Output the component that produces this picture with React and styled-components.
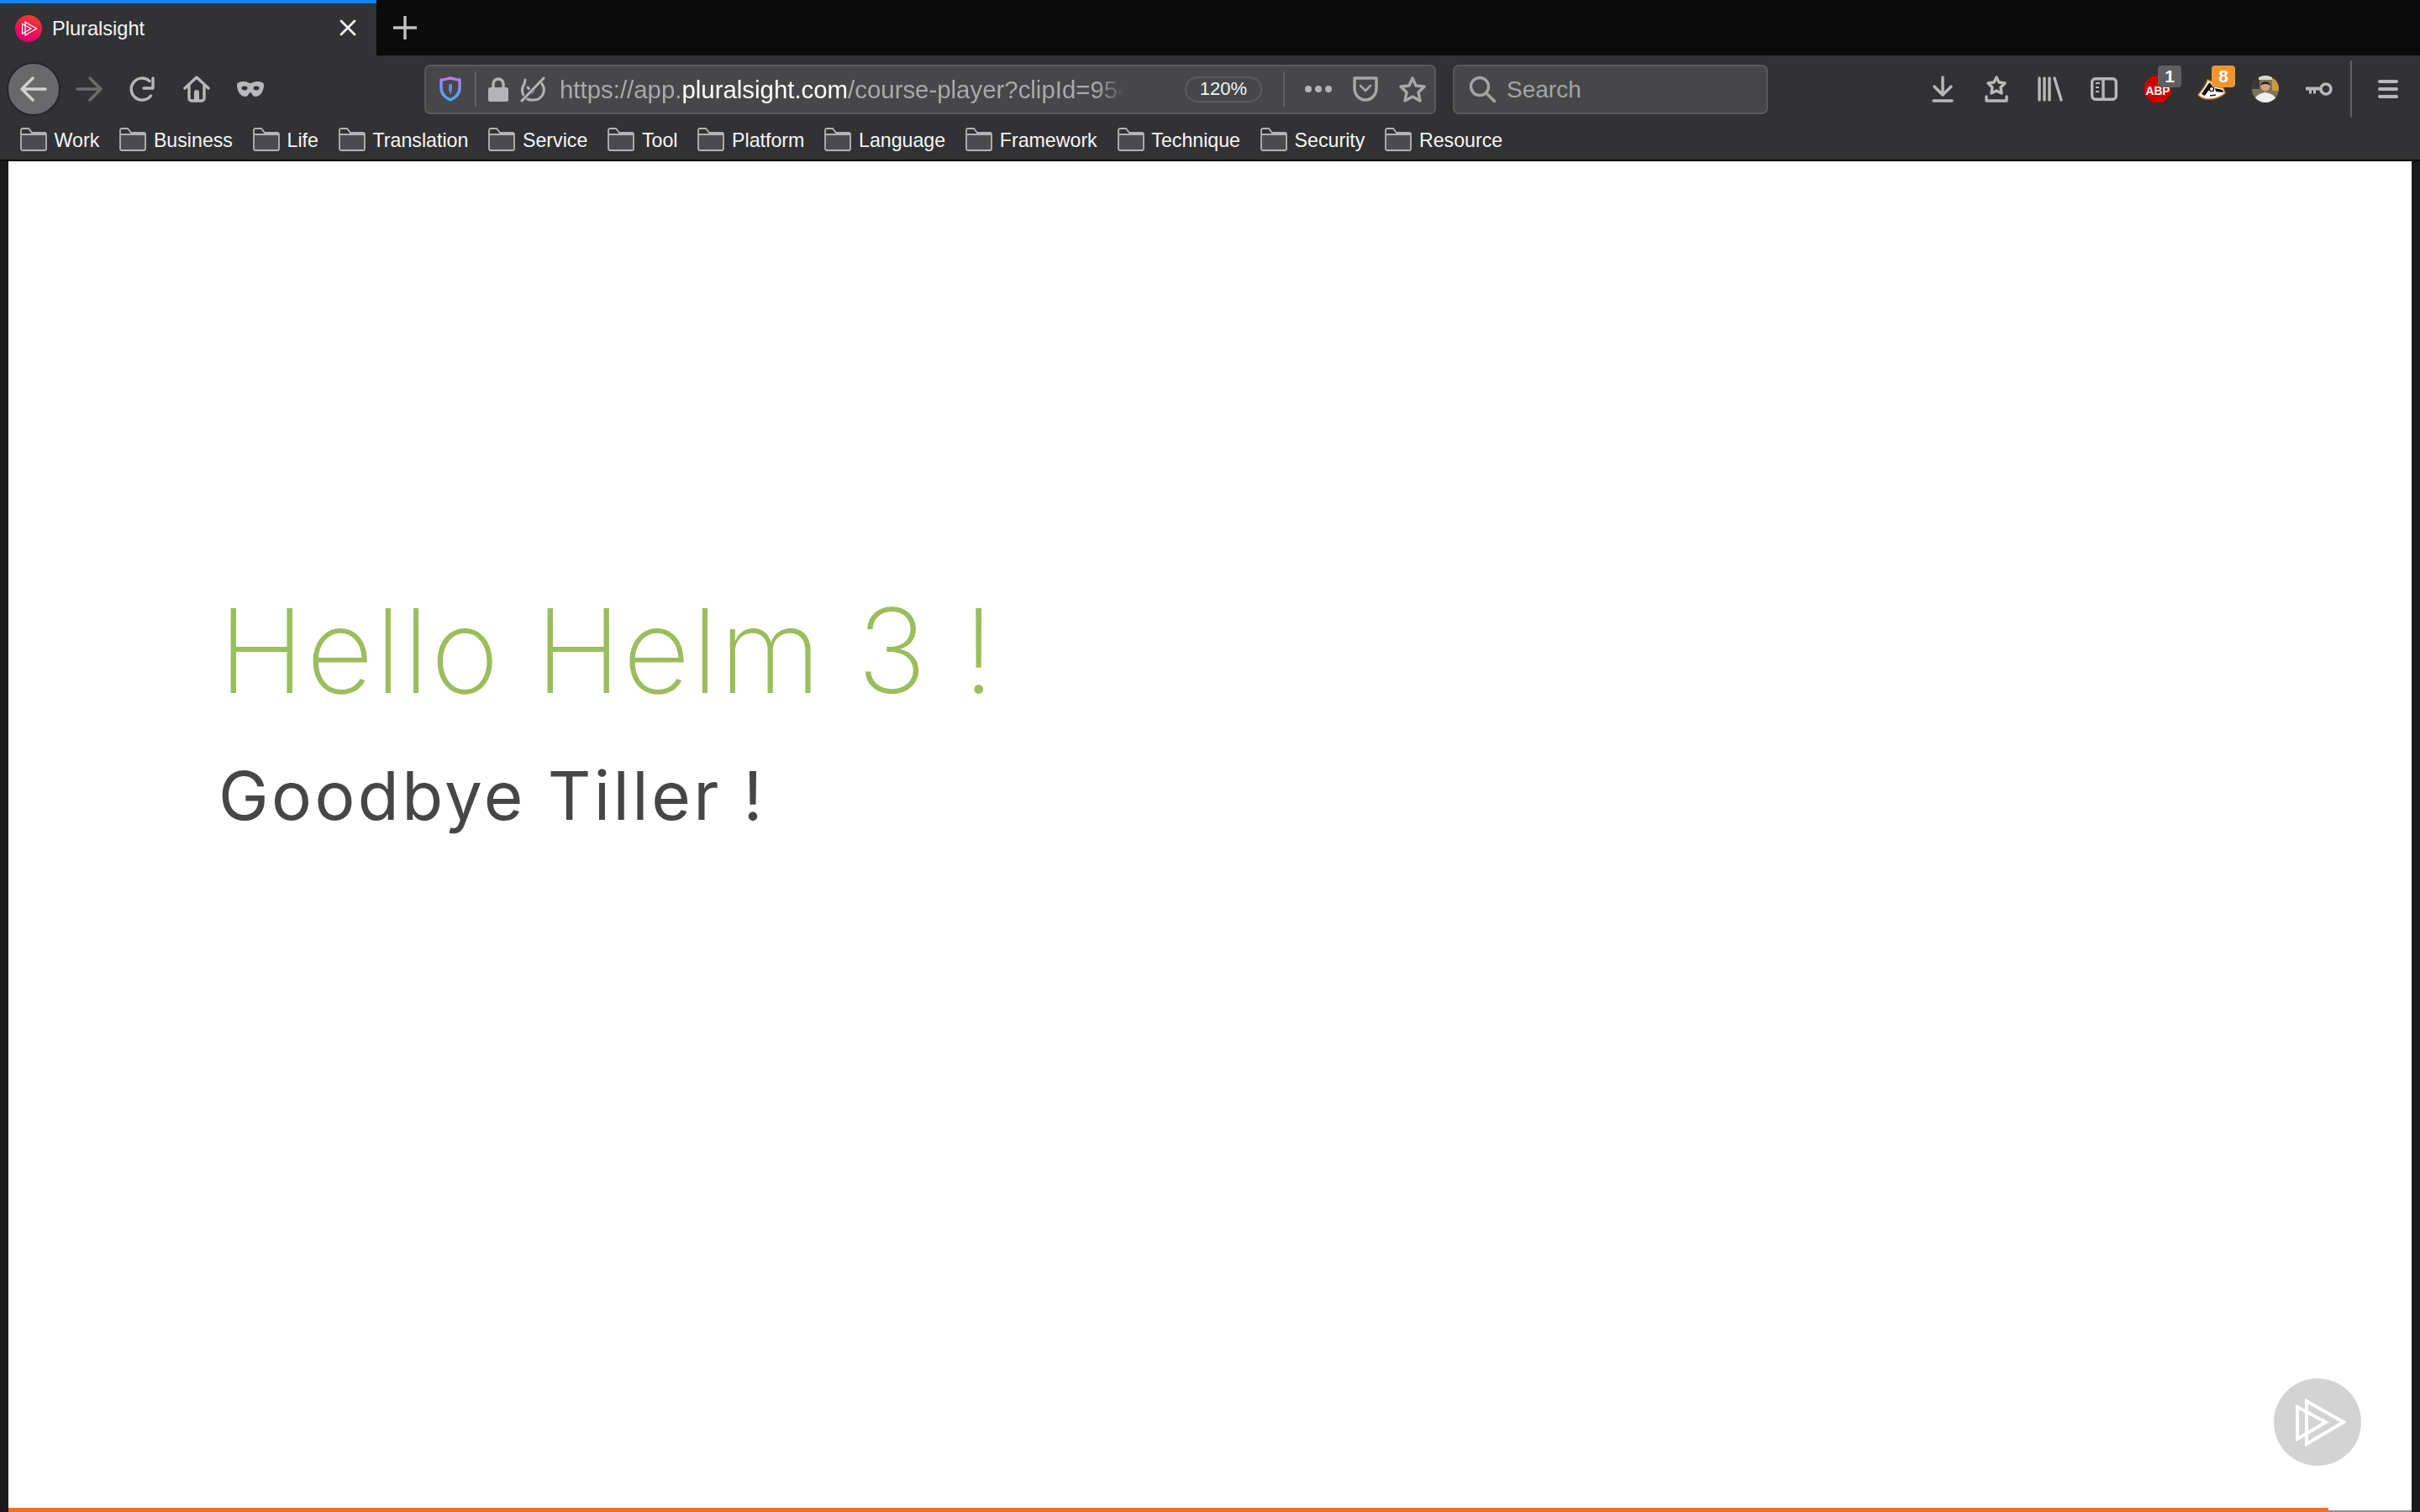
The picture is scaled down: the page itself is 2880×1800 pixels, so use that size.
import styled, { createGlobalStyle } from "styled-components";

const GlobalStyle = createGlobalStyle`
    html, body {
        margin: 0;
        padding: 0;
        background: #1a1a1a;
        overflow: hidden;
    }
`;

const BOOKMARKS = ["Work", "Business", "Life", "Translation", "Service", "Tool", "Platform", "Language", "Framework", "Technique", "Security", "Resource"];

const FolderIcon = () => (
    <FolderSvg viewBox="0 0 32 28">
        <path d="M1 8H31V25a2 2 0 0 1-2 2H3a2 2 0 0 1-2-2Z" fill="#4b4b4d" />
        <path d="M1 25V3a2 2 0 0 1 2-2H10l4 5H29a2 2 0 0 1 2 2V25a2 2 0 0 1-2 2H3a2 2 0 0 1-2-2ZM1 8H31" fill="none" stroke="#b4b4b6" strokeWidth="1.8" />
    </FolderSvg>
);

const BackIcon = () => (
    <IconSvg $size={32} viewBox="0 0 32 32" fill="none" stroke="currentColor" strokeWidth="3.4" strokeLinecap="round" strokeLinejoin="round">
        <path d="M30 16H2M15 3L2 16L15 29" />
    </IconSvg>
);

const ForwardIcon = () => (
    <IconSvg $size={32} $color="#6d6d6f" viewBox="0 0 32 32" fill="none" stroke="currentColor" strokeWidth="3.4" strokeLinecap="round" strokeLinejoin="round">
        <path d="M2 16H30M17 3L30 16L17 29" />
    </IconSvg>
);

const ReloadIcon = () => (
    <IconSvg $size={32} viewBox="0 0 32 32" fill="none" stroke="currentColor" strokeWidth="3.4" strokeLinecap="round" strokeLinejoin="round">
        <path d="M24 6.5A13 13 0 1 0 25.5 24M28 3V15H17" />
    </IconSvg>
);

const HomeIcon = () => (
    <IconSvg $size={32} viewBox="0 0 32 32" fill="none" stroke="currentColor" strokeWidth="3.4" strokeLinecap="round" strokeLinejoin="round">
        <path d="M2 15L16 2L30 15M7 12V27a3 3 0 0 0 3 3H22a3 3 0 0 0 3-3V12" />
        <path d="M13 30V20a3 3 0 0 1 6 0V30Z" fill="currentColor" stroke="none" />
    </IconSvg>
);

const MaskIcon = () => (
    <IconSvg $size={32} viewBox="0 0 32 18">
        <path fill="currentColor" d="M0 4C0 1 4 0 8 0C12 0 14 2 16 2C18 2 20 0 24 0C28 0 32 1 32 4C32 11 28 18 22 18C18 18 18 13 16 13C14 13 14 18 10 18C4 18 0 11 0 4Z" />
        <ellipse cx="9" cy="8" rx="3.5" ry="2.4" fill="#323234" />
        <ellipse cx="23" cy="8" rx="3.5" ry="2.4" fill="#323234" />
    </IconSvg>
);

const ShieldIcon = () => (
    <IconSvg $size={26} viewBox="0 0 26 30">
        <defs>
            <linearGradient id="shieldGrad" x1="0" y1="0" x2="0" y2="1">
                <stop offset="0" stopColor="#b57cf5" />
                <stop offset="1" stopColor="#3fa9ff" />
            </linearGradient>
        </defs>
        <path d="M2 4C8 4 10 2 13 2C16 2 18 4 24 4V14C24 21 18 26 13 28C8 26 2 21 2 14Z" fill="none" stroke="url(#shieldGrad)" strokeWidth="3.4" strokeLinejoin="round" />
        <path d="M11 9H15V16L13 22L11 16Z" fill="#6f86d8" />
    </IconSvg>
);

const LockIcon = () => (
    <IconSvg $size={26} viewBox="0 0 26 30">
        <path d="M7 14V9a6 6 0 0 1 12 0V14" fill="none" stroke="currentColor" strokeWidth="3.4" />
        <rect x="1" y="13" width="24" height="17" rx="2.5" fill="currentColor" />
    </IconSvg>
);

const TrackingIcon = () => (
    <IconSvg $size={32} viewBox="0 0 32 32" fill="none" stroke="currentColor" strokeWidth="3" strokeLinecap="round" strokeLinejoin="round">
        <path d="M7 5L6 10A12 12 0 0 0 13 29H17A12 12 0 0 0 27 10L25 6" />
        <path d="M10 14L15 20L24 6" />
        <path d="M29 2L3 30" stroke="#474749" strokeWidth="5" />
        <path d="M29 3L3 30" />
    </IconSvg>
);

const PocketIcon = () => (
    <IconSvg $size={32} viewBox="0 0 32 32" fill="none" stroke="currentColor" strokeWidth="3.4" strokeLinecap="round" strokeLinejoin="round">
        <path d="M3 3H29V15C29 23 23 29 16 29C9 29 3 23 3 15Z" />
        <path d="M10 12L16 18L22 12" strokeWidth="2.6" />
    </IconSvg>
);

const StarIcon = () => (
    <IconSvg $size={32} viewBox="0 0 32 32" fill="none" stroke="currentColor" strokeWidth="3.4" strokeLinejoin="round">
        <path d="M16 3L20 12L30 13L23 20L25 30L16 25L7 30L9 20L2 13L12 12Z" />
    </IconSvg>
);

const SearchIcon = () => (
    <IconSvg $size={32} viewBox="0 0 32 32" fill="none" stroke="currentColor" strokeWidth="3.4" strokeLinecap="round">
        <circle cx="13" cy="13" r="10.5" />
        <path d="M21 21L31 31" />
    </IconSvg>
);

const DownloadIcon = () => (
    <IconSvg $size={26} viewBox="0 0 26 32" fill="none" stroke="currentColor" strokeWidth="3.4" strokeLinecap="round" strokeLinejoin="round">
        <path d="M13 2V23M3 13L13 23L23 13M2 30H24" />
    </IconSvg>
);

const SavedIcon = () => (
    <IconSvg $size={28} viewBox="0 0 28 32" fill="none" stroke="currentColor" strokeWidth="3.4" strokeLinejoin="round" strokeLinecap="round">
        <path d="M14 2L17 8L24 9L19 14L20 21L14 18L8 21L9 14L4 9L11 8Z" />
        <path d="M2 25V30H26V25" />
    </IconSvg>
);

const LibraryIcon = () => (
    <IconSvg $size={32} viewBox="0 0 32 32" fill="none" stroke="currentColor" strokeWidth="3.4" strokeLinecap="round">
        <path d="M3 3V29M9 3V29M15 3V29M21 3L29 29" />
    </IconSvg>
);

const SidebarIcon = () => (
    <IconSvg $size={32} viewBox="0 0 32 28" fill="none" stroke="currentColor" strokeWidth="3.4">
        <rect x="1.7" y="1.7" width="28.6" height="24.6" rx="4" />
        <path d="M15 2V26" />
        <path d="M6 7H11M6 12H10M6 17H10" strokeWidth="2.2" />
    </IconSvg>
);

const AbpIcon = () => (
    <IconSvg $size={32} viewBox="0 0 32 32">
        <path d="M9.5 0H22.5L32 9.5V22.5L22.5 32H9.5L0 22.5V9.5Z" fill="#cc0000" />
        <text x="16" y="23" textAnchor="middle" fontFamily="'Liberation Sans', sans-serif" fontWeight="700" fontSize="15" textLength="29" lengthAdjust="spacingAndGlyphs" fill="#fff">ABP</text>
    </IconSvg>
);

const BadgerIcon = () => (
    <IconSvg $size={34} viewBox="0 0 34 26">
        <path d="M1 20C6 14 11 8 12 2L17 4L21 10L31 12L33 18C28 22 22 25 14 25C9 25 4 23 1 20Z" fill="#fff" stroke="#e8781f" strokeWidth="1.4" strokeLinejoin="round" />
        <path d="M5 19L13 7L15 5L18 10L13 15L9 21ZM21 12L30 14L31 17L22 16Z" fill="#111" />
        <circle cx="17" cy="13" r="2.6" fill="#fff" stroke="#111" strokeWidth="1.4" />
        <path d="M15 21L22 20" stroke="#111" strokeWidth="1.6" />
    </IconSvg>
);

const AvatarIcon = () => (
    <IconSvg $size={32} viewBox="0 0 32 32">
        <defs>
            <clipPath id="avatarClip"><circle cx="16" cy="16" r="16" /></clipPath>
        </defs>
        <g clipPath="url(#avatarClip)">
            <rect width="32" height="32" fill="#7d7460" />
            <rect x="0" y="0" width="9" height="16" fill="#3a3a30" />
            <rect x="24" y="4" width="8" height="14" fill="#c79a45" />
            <rect x="8" y="0" width="16" height="5" fill="#d8d8cc" />
            <path d="M2 32C3 24 9 21 16 20C23 21 29 24 30 32Z" fill="#efefef" />
            <circle cx="16" cy="13" r="5.4" fill="#d3a482" />
            <path d="M10.5 12C10 6 22 6 21.5 12C19 9 13 9 10.5 12Z" fill="#1a1614" />
        </g>
    </IconSvg>
);

const KeyIcon = () => (
    <IconSvg $size={32} viewBox="0 0 32 16">
        <circle cx="24" cy="8" r="6" fill="none" stroke="currentColor" strokeWidth="3.6" />
        <path d="M0 5.4H18V9.6H12V13.5H9V9.6H7V13.5H4V9.6H0Z" fill="currentColor" />
    </IconSvg>
);

const MenuIcon = () => (
    <IconSvg $size={24} viewBox="0 0 24 24" fill="none" stroke="currentColor" strokeWidth="4" strokeLinecap="round">
        <path d="M2 3H22M2 12H22M2 21H22" />
    </IconSvg>
);

const PluralsightMark = ({ size, stroke }) => (
    <svg width={size} height={size} viewBox="0 0 104 104" fill="none" stroke={stroke} strokeWidth="4">
        <path d="M39 27L83 52L39 78Z" />
        <path d="M28 34V72L62 52Z" />
    </svg>
);

export default function App() {
    return (
        <Browser>
            <GlobalStyle />
            <TabStrip>
                <ActiveTab>
                    <Favicon><PluralsightMark size={32} stroke="#fff" /></Favicon>
                    <TabTitle>Pluralsight</TabTitle>
                    <CloseGlyph viewBox="0 0 20 20" fill="none" stroke="#f0f0f0" strokeWidth="2.8" strokeLinecap="round">
                        <path d="M2 2L18 18M18 2L2 18" />
                    </CloseGlyph>
                </ActiveTab>
                <NewTab viewBox="0 0 28 28" fill="none" stroke="#c4c4c4" strokeWidth="3.4" strokeLinecap="round">
                    <path d="M14 1V27M1 14H27" />
                </NewTab>
            </TabStrip>

            <NavBar>
                <BackButton><BackIcon /></BackButton>
                <NavGroup>
                    <Slot><ForwardIcon /></Slot>
                    <Slot><ReloadIcon /></Slot>
                    <Slot><HomeIcon /></Slot>
                    <Slot><MaskIcon /></Slot>
                </NavGroup>

                <UrlBar>
                    <UrlIcon $width={58}><ShieldIcon /></UrlIcon>
                    <Separator />
                    <UrlIcon $width={50} $left={1}><LockIcon /></UrlIcon>
                    <UrlIcon $width={32}><TrackingIcon /></UrlIcon>
                    <UrlText>
                        https://app.<strong>pluralsight.com</strong>/course-player?clipId=954a
                    </UrlText>
                    <ZoomPill>120%</ZoomPill>
                    <Separator />
                    <PageActions>
                        <Dots><i /><i /><i /></Dots>
                        <PocketIcon />
                        <StarIcon />
                    </PageActions>
                </UrlBar>

                <SearchBar>
                    <SearchIcon />
                    <SearchLabel>Search</SearchLabel>
                </SearchBar>

                <ToolGroup>
                    <Slot><DownloadIcon /></Slot>
                    <Slot><SavedIcon /></Slot>
                    <Slot><LibraryIcon /></Slot>
                    <Slot><SidebarIcon /></Slot>
                    <Slot><AbpIcon /><Badge $color="#5f5f61">1</Badge></Slot>
                    <Slot><BadgerIcon /><Badge $color="#f0952e">8</Badge></Slot>
                    <Slot><AvatarIcon /></Slot>
                    <Slot><KeyIcon /></Slot>
                    <ToolDivider />
                    <Slot><MenuIcon /></Slot>
                </ToolGroup>
            </NavBar>

            <BookmarkBar>
                {BOOKMARKS.map(name => (
                    <Bookmark key={name}>
                        <FolderIcon />
                        <span>{name}</span>
                    </Bookmark>
                ))}
            </BookmarkBar>

            <Viewport>
                <Slide>
                    <Headline>Hello Helm 3 !</Headline>
                    <Subhead>Goodbye Tiller !</Subhead>
                </Slide>
                <PlayBadge><PluralsightMark size={104} stroke="#fff" /></PlayBadge>
                <Progress>
                    <ProgressDone style={{ width: `${(2761 / 2860) * 100}%` }} />
                    <ProgressRest />
                </Progress>
            </Viewport>
        </Browser>
    );
}

const Browser = styled.div`
    width: 2880px;
    height: 1800px;
    display: flex;
    flex-direction: column;
    background: #1a1a1a;
    font-family: "Liberation Sans", Arial, sans-serif;
    overflow: hidden;
`;

const TabStrip = styled.div`
    height: 66px;
    flex: none;
    display: flex;
    align-items: center;
    background: #0b0b0b;
`;

const ActiveTab = styled.div`
    width: 448px;
    height: 66px;
    box-sizing: border-box;
    display: flex;
    align-items: center;
    padding: 0 24px 0 18px;
    background: #323234;
    border-top: 4px solid #0a84ff;
`;

const Favicon = styled.div`
    width: 32px;
    height: 32px;
    margin-top: -2px;
    border-radius: 50%;
    background: linear-gradient(20deg, #e5006e 20%, #f0432a 95%);
    flex: none;
`;

const TabTitle = styled.span`
    margin-left: 12px;
    flex: 1;
    color: #f4f4f4;
    font-size: 23.6px;
    margin-top: -2px;
`;

const CloseGlyph = styled.svg`
    width: 20px;
    height: 20px;
    margin-top: -4px;
`;

const NewTab = styled.svg`
    width: 28px;
    height: 28px;
    margin-left: 20px;
`;

const NavBar = styled.div`
    height: 80px;
    flex: none;
    display: flex;
    align-items: center;
    padding-left: 8px;
    background: #323234;
    color: #b8b8ba;
`;

const IconSvg = styled.svg`
    width: ${props => props.$size}px;
    flex: none;
    color: ${props => props.$color || "inherit"};
`;

const FolderSvg = styled.svg`
    width: 32px;
    height: 28px;
    flex: none;
`;

const Slot = styled.div`
    position: relative;
    width: 64px;
    height: 64px;
    flex: none;
    display: flex;
    align-items: center;
    justify-content: center;
`;

const BackButton = styled(Slot)`
    box-sizing: border-box;
    border-radius: 50%;
    background: #69696b;
    border: 2px solid #262628;
    color: #d0d0d0;
`;

const NavGroup = styled.div`
    display: flex;
    margin-left: 2px;
`;

const UrlBar = styled.div`
    width: 1204px;
    height: 59px;
    box-sizing: border-box;
    margin-left: 175px;
    display: flex;
    align-items: center;
    background: #474749;
    border: 2px solid #59595b;
    border-radius: 7px;
`;

const UrlIcon = styled.div`
    width: ${props => props.$width}px;
    margin-left: ${props => props.$left || 0}px;
    display: flex;
    justify-content: center;
    flex: none;
    color: #b4b4b6;
`;

const Separator = styled.div`
    width: 2px;
    height: 42px;
    flex: none;
    background: #5f6064;
`;

const UrlText = styled.div`
    width: 700px;
    margin-left: 16px;
    padding-top: 2px;
    flex: none;
    overflow: hidden;
    white-space: nowrap;
    color: #a9a9ab;
    font-size: 29.4px;
    -webkit-mask-image: linear-gradient(to right, #000 640px, transparent 672px);
    mask-image: linear-gradient(to right, #000 640px, transparent 672px);

    strong {
        color: #fff;
        font-weight: 400;
    }
`;

const ZoomPill = styled.div`
    width: 92px;
    height: 31px;
    box-sizing: border-box;
    margin-left: 44px;
    margin-right: 25px;
    flex: none;
    display: flex;
    align-items: center;
    justify-content: center;
    border: 2px solid #5b5b5d;
    border-radius: 16px;
    color: #f2f2f2;
    font-size: 22px;
`;

const PageActions = styled.div`
    flex: 1;
    display: flex;
    align-items: center;
    padding-left: 24px;
    gap: 24px;
    color: #a8a8aa;
`;

const Dots = styled.div`
    display: flex;
    gap: 4px;
    width: 32px;

    i {
        width: 8px;
        height: 8px;
        border-radius: 50%;
        background: #b4b4b6;
    }
`;

const SearchBar = styled.div`
    width: 375px;
    height: 59px;
    box-sizing: border-box;
    margin-left: 20px;
    padding-left: 17px;
    display: flex;
    align-items: center;
    gap: 13px;
    background: #474749;
    border: 2px solid #59595b;
    border-radius: 7px;
    color: #a4a4a6;
`;

const SearchLabel = styled.span`
    font-size: 28px;
    padding-top: 2px;
`;

const ToolGroup = styled.div`
    margin-left: 176px;
    display: flex;
    align-items: center;
`;

const Badge = styled.span`
    position: absolute;
    left: 32px;
    top: 4px;
    width: 28px;
    height: 26px;
    display: flex;
    align-items: center;
    justify-content: center;
    border-radius: 4px;
    background: ${props => props.$color};
    color: #fff;
    font-size: 21px;
    font-weight: 700;
`;

const ToolDivider = styled.div`
    width: 2px;
    height: 68px;
    margin: 0 11px 0 5px;
    background: #626264;
`;

const BookmarkBar = styled.div`
    height: 46px;
    flex: none;
    display: flex;
    align-items: center;
    gap: 24px;
    padding: 0 0 4px 24px;
    box-sizing: border-box;
    background: #323234;
    border-bottom: 2px solid #0b0b0b;
`;

const Bookmark = styled.div`
    display: flex;
    align-items: center;
    gap: 8.6px;
    color: #f6f6f6;
    font-size: 23.2px;

    span {
        margin-top: 2px;
    }
`;

const Viewport = styled.div`
    position: relative;
    flex: 1;
    margin: 0 10px;
    display: flex;
    flex-direction: column;
    background: #fff;
`;

const Slide = styled.div`
    flex: 1;
    display: flex;
    flex-direction: column;
    padding: 513px 0 0 250px;
`;

const Headline = styled.h1`
    margin: 0;
    font-family: Inter, sans-serif;
    font-weight: 250;
    font-size: 139px;
    line-height: 140px;
    letter-spacing: 1.9px;
    color: #9bbd5c;
`;

const Subhead = styled.h2`
    margin: 57px 0 0;
    font-family: Inter, sans-serif;
    font-weight: 400;
    font-size: 80px;
    line-height: 90px;
    letter-spacing: 3.4px;
    color: #464646;
`;

const PlayBadge = styled.div`
    position: absolute;
    right: 60px;
    bottom: 55px;
    width: 104px;
    height: 104px;
    border-radius: 50%;
    background: #d3d3d3;
`;

const Progress = styled.div`
    height: 5px;
    flex: none;
    display: flex;
    align-items: flex-end;
`;

const ProgressDone = styled.div`
    height: 5px;
    background: #f96f1e;
`;

const ProgressRest = styled.div`
    height: 2px;
    flex: 1;
    background: #8f8f8f;
`;
